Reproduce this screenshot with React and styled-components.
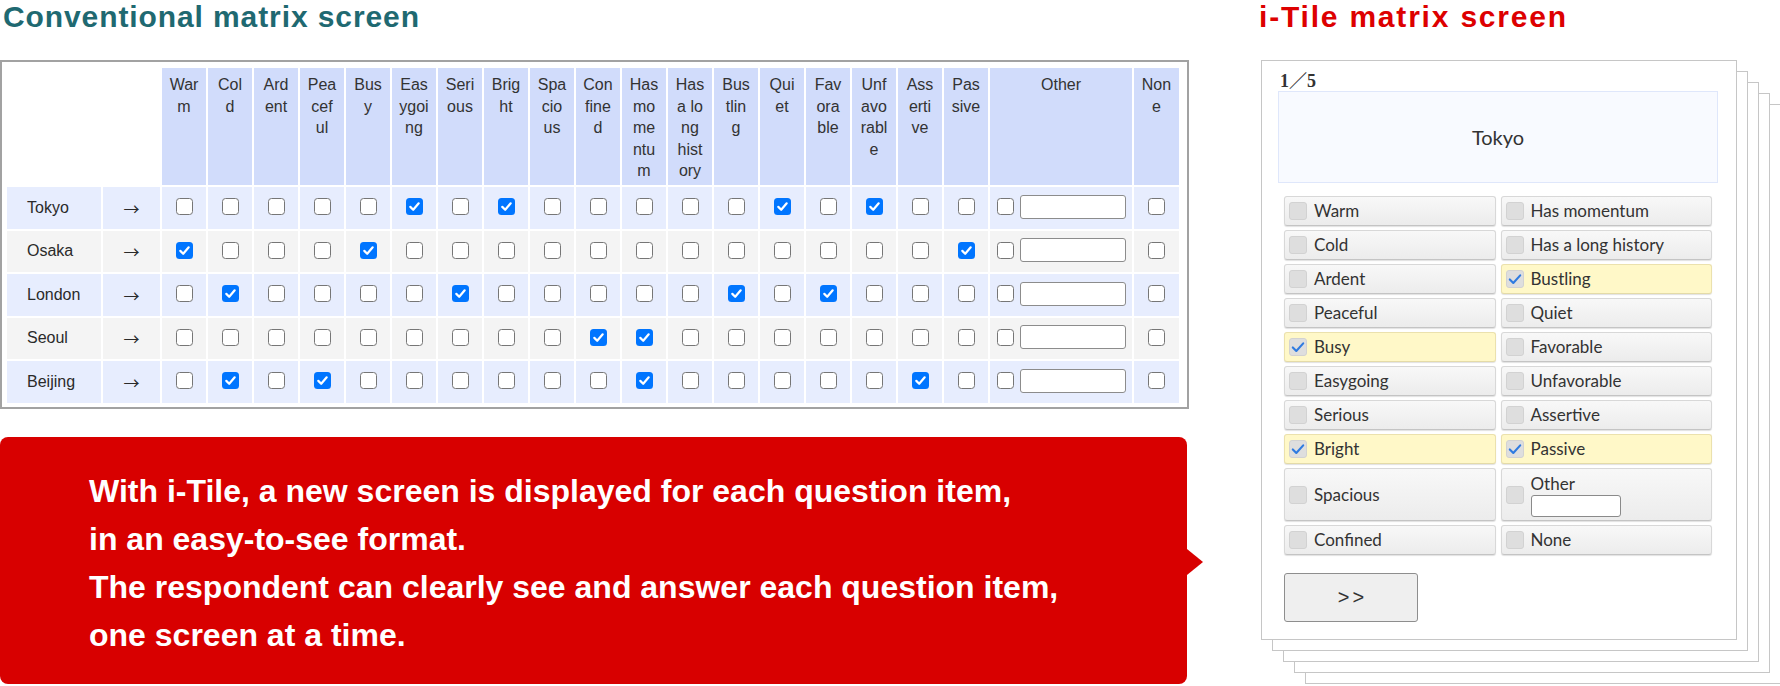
import React from "react";
import styled, { createGlobalStyle } from "styled-components";

const GlobalStyle = createGlobalStyle`
  html, body { margin: 0; padding: 0; background: #ffffff; }
  body { font-family: "Liberation Sans", Arial, sans-serif; }
  *, *::before, *::after { box-sizing: border-box; }
`;

const Page = styled.main`
  display: grid;
  grid-template-columns: 1189px 476px;
  column-gap: 72px;
  width: 1780px;
  height: 686px;
  overflow: hidden;
`;

const Column = styled.section`
  display: flex;
  flex-direction: column;
  align-items: flex-start;
`;

const Heading = styled.h2`
  margin: 0 0 26px ${(p) => p.$indent}px;
  font: bold 30px/34px "Liberation Sans", Arial, sans-serif;
  letter-spacing: ${(p) => p.$spacing}px;
  color: ${(p) => p.$color};
  white-space: nowrap;
`;

/* ---------- conventional matrix ---------- */

const MatrixFrame = styled.div`
  width: 1189px;
  border: 2px solid #a2a2a2;
  padding: 4px 6px 2px 3px;
`;

const MatrixTable = styled.table`
  width: 1176px;
  table-layout: fixed;
  border-collapse: separate;
  border-spacing: 2px;
  font: 16px "Liberation Sans", Arial, sans-serif;
  color: #333;
`;

const Col = styled.col`
  width: ${(p) => p.$w}px;
`;

const HeadRow = styled.tr`
  height: 117px;
`;

const BodyRow = styled.tr`
  height: 41.5px;
`;

const HeadCell = styled.th`
  padding: 6px 0 0;
  vertical-align: top;
  text-align: center;
  font-weight: normal;
  line-height: 21.5px;
  white-space: pre;
  color: #333;
  background: ${(p) => (p.$blank ? "transparent" : "#d1dcfb")};
`;

const Cell = styled.td`
  padding: 0 0 0 ${(p) => (p.$left ? "20px" : "0")};
  vertical-align: middle;
  text-align: ${(p) => (p.$left ? "left" : "center")};
  background: ${(p) => (p.$alt ? "#f4f4f4" : "#e7edfe")};
  color: #2a2a2a;
`;

const ArrowCell = styled(Cell)`
  font: 16px "Noto Sans CJK JP", "DejaVu Sans", sans-serif;
`;

const CellInner = styled.div`
  display: flex;
  align-items: center;
  justify-content: center;
  gap: 6px;
  margin-top: -2px;
`;

const MatrixBox = styled.span`
  display: inline-flex;
  align-items: center;
  justify-content: center;
  width: 17px;
  height: 17px;
  border-radius: 3.5px;
  border: ${(p) => (p.$on ? "none" : "1.6px solid #767676")};
  background: ${(p) => (p.$on ? "#0075ff" : "#ffffff")};
`;

const OtherField = styled.input`
  width: 106px;
  height: 24px;
  margin: 0;
  padding: 0 4px;
  border: 1.5px solid #8c8c8c;
  border-radius: 3px;
  background: #fff;
  font: 14px "Liberation Sans", Arial, sans-serif;
`;

const MatrixCheck = ({ on }) => (
  <MatrixBox $on={on}>
    {on && (
      <svg width="17" height="17" viewBox="0 0 17 17">
        <path d="M4.3 8.9 L7.2 11.8 L12.7 5.3" fill="none" stroke="#fff" strokeWidth="2.2" strokeLinecap="round" strokeLinejoin="round" />
      </svg>
    )}
  </MatrixBox>
);

/* ---------- callout ---------- */

const Callout = styled.div`
  position: relative;
  margin-top: 28px;
  width: 1187px;
  height: 247px;
  padding: 30px 0 0 89px;
  border-radius: 8px;
  background: #d80000;
  color: #fff;
  font: bold 32px/48px "Liberation Sans", Arial, sans-serif;
  &::after {
    content: "";
    position: absolute;
    left: 100%;
    top: 112px;
    border-left: 16px solid #d80000;
    border-top: 13px solid transparent;
    border-bottom: 13px solid transparent;
  }
`;

const CalloutLine = styled.p`
  margin: 0;
  white-space: nowrap;
`;

/* ---------- i-Tile ---------- */

const Sheet = styled.div`
  width: 476px;
  height: 580px;
  border: 1px solid #c6c6c6;
  background: #fff;
  padding: 10px 18px 0 16px;
  display: flex;
  flex-direction: column;
  box-shadow:
    11px 11px 0 -1px #fff, 11px 11px 0 0 #c6c6c6,
    22px 22px 0 -1px #fff, 22px 22px 0 0 #c6c6c6,
    33px 33px 0 -1px #fff, 33px 33px 0 0 #c6c6c6,
    44px 44px 0 -1px #fff, 44px 44px 0 0 #c6c6c6;
`;

const Counter = styled.div`
  height: 20px;
  margin-left: 2px;
  font: bold 18px/20px "Liberation Serif", "Noto Sans CJK JP", serif;
  color: #333;
`;

const Question = styled.div`
  height: 92px;
  display: flex;
  align-items: center;
  justify-content: center;
  border: 1px solid #dfe7fb;
  background: #f8faff;
  font: 20px "Lato", "Liberation Sans", sans-serif;
  color: #333;
`;

const TileGrid = styled.div`
  display: grid;
  grid-template-columns: 1fr 1fr;
  column-gap: 5px;
  row-gap: 4px;
  margin: 13px 6px 0;
`;

const Tile = styled.div`
  display: flex;
  align-items: center;
  gap: 7px;
  height: ${(p) => (p.$tall ? 53 : 30)}px;
  padding: 0 4px;
  border: 1px solid ${(p) => (p.$on ? "#ebe1ad" : "#d8d8d8")};
  border-bottom-color: ${(p) => (p.$on ? "#e4dba8" : "#c4c4c4")};
  border-radius: 3px;
  background: ${(p) => (p.$on ? "#fff8c8" : "linear-gradient(#f8f8f8, #ececec)")};
  box-shadow: 0 1px 1px rgba(0, 0, 0, 0.12);
  font: 17px/20px "Lato", "Liberation Sans", sans-serif;
  color: #333;
`;

const TileBox = styled.span`
  flex: none;
  display: inline-flex;
  align-items: center;
  justify-content: center;
  width: 18px;
  height: 18px;
  border: 1px solid #d2d2d2;
  border-radius: 3px;
  background: #dedede;
`;

const TileStack = styled.div`
  display: flex;
  flex-direction: column;
  gap: 1px;
  padding-top: 1px;
`;

const TileField = styled.input`
  width: 90px;
  height: 22px;
  margin: 0;
  border: 1.5px solid #8a8a8a;
  border-radius: 3px;
  background: #fff;
`;

const NextButton = styled.button`
  width: 134px;
  height: 49px;
  margin: 18px 0 0 6px;
  padding: 0;
  border: 1.5px solid #8e8e8e;
  border-radius: 3px;
  background: #efefef;
  color: #333;
  font: 20px "Liberation Sans", Arial, sans-serif;
  letter-spacing: 3px;
  text-indent: 3px;
`;

const TileCheck = ({ on }) => (
  <TileBox>
    {on && (
      <svg width="16" height="16" viewBox="0 0 16 16">
        <path d="M2.8 8.4 L6.3 12 L13.2 4.4" fill="none" stroke="#2f7be0" strokeWidth="2.1" strokeLinecap="round" strokeLinejoin="round" />
      </svg>
    )}
  </TileBox>
);

/* ---------- data ---------- */

const headers = [
  ["War", "m"],
  ["Col", "d"],
  ["Ard", "ent"],
  ["Pea", "cef", "ul"],
  ["Bus", "y"],
  ["Eas", "ygoi", "ng"],
  ["Seri", "ous"],
  ["Brig", "ht"],
  ["Spa", "cio", "us"],
  ["Con", "fine", "d"],
  ["Has", "mo", "me", "ntu", "m"],
  ["Has", "a lo", "ng", "hist", "ory"],
  ["Bus", "tlin", "g"],
  ["Qui", "et"],
  ["Fav", "ora", "ble"],
  ["Unf", "avo", "rabl", "e"],
  ["Ass", "erti", "ve"],
  ["Pas", "sive"],
];

const rows = [
  { city: "Tokyo", on: [5, 7, 13, 15] },
  { city: "Osaka", on: [0, 4, 17] },
  { city: "London", on: [1, 6, 12, 14] },
  { city: "Seoul", on: [9, 10] },
  { city: "Beijing", on: [1, 3, 10, 16] },
];

const tiles = [
  ["Warm", false], ["Has momentum", false],
  ["Cold", false], ["Has a long history", false],
  ["Ardent", false], ["Bustling", true],
  ["Peaceful", false], ["Quiet", false],
  ["Busy", true], ["Favorable", false],
  ["Easygoing", false], ["Unfavorable", false],
  ["Serious", false], ["Assertive", false],
  ["Bright", true], ["Passive", true],
  ["Spacious", false, "tall"], ["Other", false, "other"],
  ["Confined", false], ["None", false],
];

const Lines = ({ lines }) =>
  lines.map((l, i) => (
    <React.Fragment key={i}>
      {i > 0 && <br />}
      {l}
    </React.Fragment>
  ));

export default function App() {
  return (
    <>
      <GlobalStyle />
      <Page>
        <Column>
          <Heading $color="#1f6971" $spacing={0.9} $indent={3}>
            Conventional matrix screen
          </Heading>
          <MatrixFrame>
            <MatrixTable>
              <colgroup>
                <Col $w={94} />
                <Col $w={57} />
                {headers.map((_, i) => (
                  <Col key={i} $w={44} />
                ))}
                <Col $w={142} />
                <Col $w={45} />
              </colgroup>
              <thead>
                <HeadRow>
                  <HeadCell $blank />
                  <HeadCell $blank />
                  {headers.map((h, i) => (
                    <HeadCell key={i}>
                      <Lines lines={h} />
                    </HeadCell>
                  ))}
                  <HeadCell>Other</HeadCell>
                  <HeadCell>
                    <Lines lines={["Non", "e"]} />
                  </HeadCell>
                </HeadRow>
              </thead>
              <tbody>
                {rows.map((r, ri) => {
                  const alt = ri % 2 === 1;
                  return (
                    <BodyRow key={r.city}>
                      <Cell $alt={alt} $left>
                        {r.city}
                      </Cell>
                      <ArrowCell $alt={alt}>→</ArrowCell>
                      {headers.map((_, ci) => (
                        <Cell key={ci} $alt={alt}>
                          <CellInner>
                            <MatrixCheck on={r.on.includes(ci)} />
                          </CellInner>
                        </Cell>
                      ))}
                      <Cell $alt={alt}>
                        <CellInner>
                          <MatrixCheck on={false} />
                          <OtherField type="text" readOnly defaultValue="" />
                        </CellInner>
                      </Cell>
                      <Cell $alt={alt}>
                        <CellInner>
                          <MatrixCheck on={false} />
                        </CellInner>
                      </Cell>
                    </BodyRow>
                  );
                })}
              </tbody>
            </MatrixTable>
          </MatrixFrame>
          <Callout>
            <CalloutLine>With i-Tile, a new screen is displayed for each question item,</CalloutLine>
            <CalloutLine>in an easy-to-see format.</CalloutLine>
            <CalloutLine>The respondent can clearly see and answer each question item,</CalloutLine>
            <CalloutLine>one screen at a time.</CalloutLine>
          </Callout>
        </Column>
        <Column>
          <Heading $color="#dd0000" $spacing={1.8} $indent={-2}>
            i-Tile matrix screen
          </Heading>
          <Sheet>
            <Counter>1／5</Counter>
            <Question>Tokyo</Question>
            <TileGrid>
              {tiles.map(([label, on, kind]) => (
                <Tile key={label} $on={on} $tall={!!kind}>
                  <TileCheck on={on} />
                  {kind === "other" ? (
                    <TileStack>
                      <span>{label}</span>
                      <TileField type="text" readOnly defaultValue="" />
                    </TileStack>
                  ) : (
                    <span>{label}</span>
                  )}
                </Tile>
              ))}
            </TileGrid>
            <NextButton type="button">&gt;&gt;</NextButton>
          </Sheet>
        </Column>
      </Page>
    </>
  );
}
